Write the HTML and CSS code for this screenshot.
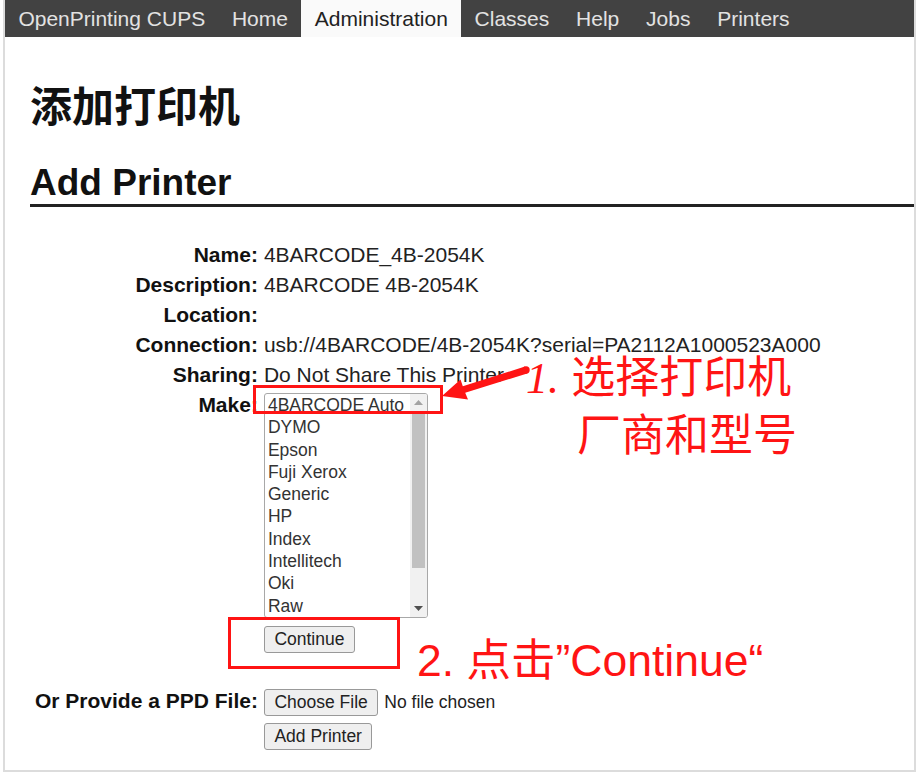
FILE: index.html
```html
<!DOCTYPE html>
<html lang="zh-CN">
<head>
    <meta charset="UTF-8">
    <meta name="viewport" content="width=device-width, initial-scale=1.0">
    <title>Add Printer - CUPS</title>
    <link rel="stylesheet" href="styles.css">
</head>
<body>
    <div class="frame">
        <nav class="header">
            <a class="brand" href="#">OpenPrinting CUPS</a>
            <a href="#">Home</a>
            <a class="active" href="#">Administration</a>
            <a href="#">Classes</a>
            <a href="#">Help</a>
            <a href="#">Jobs</a>
            <a href="#">Printers</a>
        </nav>

        <div class="content">
            <h1>添加打印机</h1>
            <h2>Add Printer</h2>

            <form id="add-printer">
                <table class="fields">
                    <tr><th>Name:</th><td>4BARCODE_4B-2054K</td></tr>
                    <tr><th>Description:</th><td>4BARCODE 4B-2054K</td></tr>
                    <tr><th>Location:</th><td></td></tr>
                    <tr><th>Connection:</th><td>usb://4BARCODE/4B-2054K?serial=PA2112A1000523A000</td></tr>
                    <tr><th>Sharing:</th><td>Do Not Share This Printer</td></tr>
                    <tr>
                        <th>Make:</th>
                        <td>
                            <!-- 厂商列表 (size=10) -->
                            <div class="listbox" role="listbox">
                                <ul class="options">
                                    <li>4BARCODE Auto</li>
                                    <li>DYMO</li>
                                    <li>Epson</li>
                                    <li>Fuji Xerox</li>
                                    <li>Generic</li>
                                    <li>HP</li>
                                    <li>Index</li>
                                    <li>Intellitech</li>
                                    <li>Oki</li>
                                    <li>Raw</li>
                                </ul>
                                <div class="scrollbar">
                                    <span class="scroll-btn">
                                        <svg width="9" height="5" viewBox="0 0 9 5"><polygon points="0,5 4.5,0 9,5" fill="#a3a3a3"/></svg>
                                    </span>
                                    <span class="thumb"></span>
                                    <span class="track"></span>
                                    <span class="scroll-btn">
                                        <svg width="9" height="5" viewBox="0 0 9 5"><polygon points="0,0 4.5,5 9,0" fill="#505050"/></svg>
                                    </span>
                                </div>
                            </div>
                        </td>
                    </tr>
                    <tr><td></td><td><button class="btn btn-continue" type="submit">Continue</button></td></tr>
                    <tr class="ppd-row">
                        <th>Or Provide a PPD File:</th>
                        <td><input class="ppd-file" type="file" name="PPD_FILE"></td>
                    </tr>
                    <tr class="submit-row"><td></td><td><button class="btn" type="submit">Add Printer</button></td></tr>
                </table>
            </form>
        </div>
    </div>

    <!-- 标注 -->
    <div class="mark mark-make"></div>
    <div class="mark mark-continue"></div>
    <svg class="arrow" width="92" height="44" viewBox="0 0 92 44">
        <polygon points="2,34 20.5,17.5 22.8,24.2 85,4.5 87.2,11.5 25.2,30.8 28,37.5" fill="#ff1414"/>
        <circle cx="86" cy="8" r="3.7" fill="#ff1414"/>
    </svg>
    <div class="note note-1"><span class="num">1.</span> 选择打印机</div>
    <div class="note note-1b">厂商和型号</div>
    <div class="note note-2">2. 点击”Continue“</div>
</body>
</html>
```

FILE: styles.css
```css
body {
    margin: 0;
    position: relative;
    background-color: #fff;
    font-family: "Liberation Sans", Arial, "Noto Sans CJK SC", sans-serif;
    color: #222;
}
.frame {
    box-sizing: border-box;
    width: 913px;
    height: 772px;
    margin-left: 3px;
    border: 2px solid #dcdcdc;
    border-top: 0;
}
.header {
    display: flex;
    height: 37px;
    background-color: #424242;
}
.header a {
    padding: 0 13.4px;
    line-height: 37px;
    font-size: 21px;
    color: #e2e2e2;
    text-decoration: none;
}
.header a.active {
    background-color: #fafafa;
    color: #222;
}
.content {
    padding-left: 25px;
}
h1 {
    margin: 42px 0 0;
    font-family: "Noto Sans CJK SC", sans-serif;
    font-size: 42px;
    line-height: 49px;
    font-weight: bold;
    color: #111;
}
h2 {
    margin: 33px 0 0;
    font-size: 37px;
    line-height: 43px;
    color: #111;
    border-bottom: 3px solid #222;
}
.fields {
    margin: 33px 0 0 2px;
    border-spacing: 0;
    font-size: 21px;
    line-height: 24px;
}
.fields th {
    padding: 3px;
    text-align: right;
    vertical-align: top;
    white-space: nowrap;
    color: #111;
}
.fields td {
    padding: 3px;
    white-space: nowrap;
}

/* listbox */
.listbox {
    display: flex;
    box-sizing: border-box;
    width: 164px;
    height: 225px;
    border: 1px solid #a8a8a8;
    border-radius: 3px;
    background-color: #fff;
    overflow: hidden;
}
.options {
    flex: 1;
    margin: 0;
    padding: 0;
    list-style: none;
    font-size: 17.5px;
    line-height: 22.3px;
    color: #333;
}
.options li {
    padding-left: 3px;
}
.scrollbar {
    display: flex;
    flex-direction: column;
    width: 17px;
    background-color: #f1f1f1;
}
.scroll-btn {
    display: flex;
    align-items: center;
    justify-content: center;
    height: 17px;
}
.thumb {
    height: 155px;
    margin: 2px 2px 0;
    background-color: #c1c1c1;
}
.track {
    flex: 1;
}

.btn,
.ppd-file::file-selector-button {
    box-sizing: border-box;
    height: 27px;
    padding: 0 9.5px;
    border: 1px solid #999;
    border-radius: 3px;
    background-color: #efefef;
    font-family: "Liberation Sans", Arial, sans-serif;
    font-size: 17.5px;
    color: #222;
}
.btn-continue {
    margin-top: 2px;
}
.ppd-row th,
.ppd-row td {
    padding-top: 31px;
    line-height: 27px;
}
.submit-row td {
    padding-top: 4px;
}
.ppd-file {
    font-family: "Liberation Sans", Arial, sans-serif;
    font-size: 17.5px;
    color: #222;
}
.ppd-file::file-selector-button {
    margin-right: 6px;
}

/* annotations */
.mark {
    position: absolute;
    box-sizing: border-box;
    border: 3px solid #ff1414;
}
.mark-make {
    left: 253px;
    top: 385px;
    width: 190px;
    height: 29px;
}
.mark-continue {
    left: 228px;
    top: 617px;
    width: 172px;
    height: 52px;
}
.arrow {
    position: absolute;
    left: 440px;
    top: 362px;
}
.note {
    position: absolute;
    font-family: "Liberation Sans", "Noto Sans CJK SC", sans-serif;
    font-size: 44px;
    line-height: 1;
    color: #ff1414;
    white-space: nowrap;
}
.note .num {
    font-family: "Liberation Serif", serif;
    font-style: italic;
    font-size: 44px;
}
.note-1 {
    left: 526px;
    top: 356px;
}
.note-1b {
    left: 577px;
    top: 414px;
}
.note-2 {
    left: 417px;
    top: 639px;
    font-size: 44.5px;
}
```
